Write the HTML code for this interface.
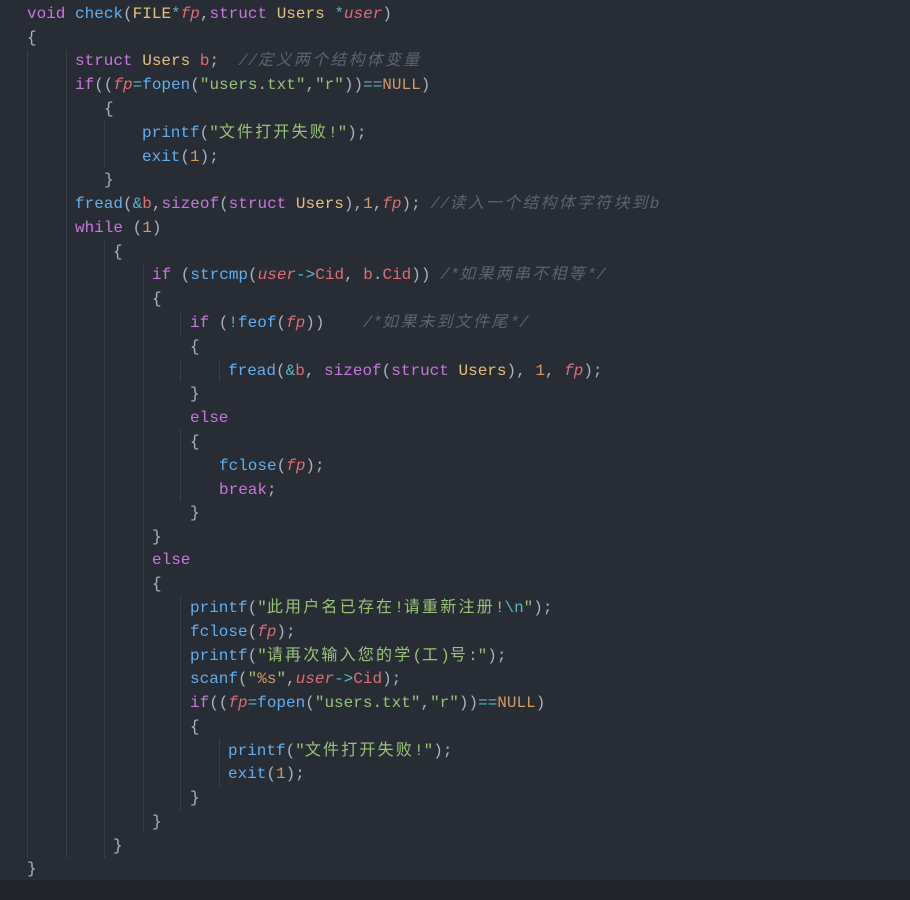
<!DOCTYPE html>
<html><head><meta charset="utf-8"><style>
html,body{margin:0;padding:0;width:910px;height:900px;overflow:hidden;background:#282c34;}
#bar{position:absolute;left:0;top:880px;width:910px;height:20px;background:#21252b;}
.l{position:absolute;left:0;height:24px;line-height:24px;white-space:pre;font-family:"Liberation Mono","Noto Sans CJK SC",monospace;font-size:16px;color:#abb2bf;}
.g{position:absolute;width:1px;background:#3b4048;}
.k{color:#c678dd}.f{color:#61afef}.t{color:#e5c07b}.v{color:#e06c75;font-style:italic}.r{color:#e06c75}
.s{color:#98c379}.n{color:#d19a66}.o{color:#56b6c2}.c{color:#5c6370;font-style:italic}
.z{letter-spacing:2.2px}
</style></head><body>
<div id="bar"></div>
<div id="guides"></div>
<div class="l" style="top:2px;left:27px"><span class="k">void</span> <span class="f">check</span>(<span class="t">FILE</span><span class="o">*</span><span class="v">fp</span>,<span class="k">struct</span> <span class="t">Users</span> <span class="o">*</span><span class="v">user</span>)</div>
<div class="l" style="top:26px;left:27px">{</div>
<div class="l" style="top:49px;left:75px"><span class="k">struct</span> <span class="t">Users</span> <span class="r">b</span>;  <span class="c">//<span class="z">定义两个结构体变量</span></span></div>
<div class="l" style="top:73px;left:75px"><span class="k">if</span>((<span class="v">fp</span><span class="o">=</span><span class="f">fopen</span>(<span class="s">"users.txt"</span>,<span class="s">"r"</span>))<span class="o">==</span><span class="n">NULL</span>)</div>
<div class="l" style="top:97px;left:104px">{</div>
<div class="l" style="top:121px;left:142px"><span class="f">printf</span>(<span class="s">"<span class="z">文件打开失败</span>!"</span>);</div>
<div class="l" style="top:145px;left:142px"><span class="f">exit</span>(<span class="n">1</span>);</div>
<div class="l" style="top:168px;left:104px">}</div>
<div class="l" style="top:192px;left:75px"><span class="f">fread</span>(<span class="o">&amp;</span><span class="r">b</span>,<span class="k">sizeof</span>(<span class="k">struct</span> <span class="t">Users</span>),<span class="n">1</span>,<span class="v">fp</span>); <span class="c">//<span class="z">读入一个结构体字符块到</span>b</span></div>
<div class="l" style="top:216px;left:75px"><span class="k">while</span> (<span class="n">1</span>)</div>
<div class="l" style="top:240px;left:113px">{</div>
<div class="l" style="top:263px;left:152px"><span class="k">if</span> (<span class="f">strcmp</span>(<span class="v">user</span><span class="o">-&gt;</span><span class="r">Cid</span>, <span class="r">b</span>.<span class="r">Cid</span>)) <span class="c">/*<span class="z">如果两串不相等</span>*/</span></div>
<div class="l" style="top:287px;left:152px">{</div>
<div class="l" style="top:311px;left:190px"><span class="k">if</span> (<span class="o">!</span><span class="f">feof</span>(<span class="v">fp</span>))    <span class="c">/*<span class="z">如果未到文件尾</span>*/</span></div>
<div class="l" style="top:335px;left:190px">{</div>
<div class="l" style="top:359px;left:228px"><span class="f">fread</span>(<span class="o">&amp;</span><span class="r">b</span>, <span class="k">sizeof</span>(<span class="k">struct</span> <span class="t">Users</span>), <span class="n">1</span>, <span class="v">fp</span>);</div>
<div class="l" style="top:382px;left:190px">}</div>
<div class="l" style="top:406px;left:190px"><span class="k">else</span></div>
<div class="l" style="top:430px;left:190px">{</div>
<div class="l" style="top:454px;left:219px"><span class="f">fclose</span>(<span class="v">fp</span>);</div>
<div class="l" style="top:478px;left:219px"><span class="k">break</span>;</div>
<div class="l" style="top:501px;left:190px">}</div>
<div class="l" style="top:525px;left:152px">}</div>
<div class="l" style="top:548px;left:152px"><span class="k">else</span></div>
<div class="l" style="top:572px;left:152px">{</div>
<div class="l" style="top:596px;left:190px"><span class="f">printf</span>(<span class="s">"<span class="z">此用户名已存在</span>!<span class="z">请重新注册</span>!<span class="o">\n</span>"</span>);</div>
<div class="l" style="top:620px;left:190px"><span class="f">fclose</span>(<span class="v">fp</span>);</div>
<div class="l" style="top:644px;left:190px"><span class="f">printf</span>(<span class="s">"<span class="z">请再次输入您的学</span>(<span class="z">工</span>)<span class="z">号</span>:"</span>);</div>
<div class="l" style="top:667px;left:190px"><span class="f">scanf</span>(<span class="s">"<span class="n">%s</span>"</span>,<span class="v">user</span><span class="o">-&gt;</span><span class="r">Cid</span>);</div>
<div class="l" style="top:691px;left:190px"><span class="k">if</span>((<span class="v">fp</span><span class="o">=</span><span class="f">fopen</span>(<span class="s">"users.txt"</span>,<span class="s">"r"</span>))<span class="o">==</span><span class="n">NULL</span>)</div>
<div class="l" style="top:715px;left:190px">{</div>
<div class="l" style="top:739px;left:228px"><span class="f">printf</span>(<span class="s">"<span class="z">文件打开失败</span>!"</span>);</div>
<div class="l" style="top:762px;left:228px"><span class="f">exit</span>(<span class="n">1</span>);</div>
<div class="l" style="top:786px;left:190px">}</div>
<div class="l" style="top:810px;left:152px">}</div>
<div class="l" style="top:834px;left:113px">}</div>
<div class="l" style="top:857px;left:27px">}</div>
<script>
var G=document.getElementById('guides');
function g(x,y1,y2){var d=document.createElement('div');d.className='g';d.style.left=x+'px';d.style.top=y1+'px';d.style.height=(y2-y1)+'px';G.appendChild(d);}
g(27,50,858);g(66,50,858);
g(104,121,168);g(104,240,858);
g(143,263,833);
g(180,311,335);g(180,359,382);g(180,430,501);g(180,596,810);
g(219,359,382);g(219,739,787);
</script>
</body></html>
